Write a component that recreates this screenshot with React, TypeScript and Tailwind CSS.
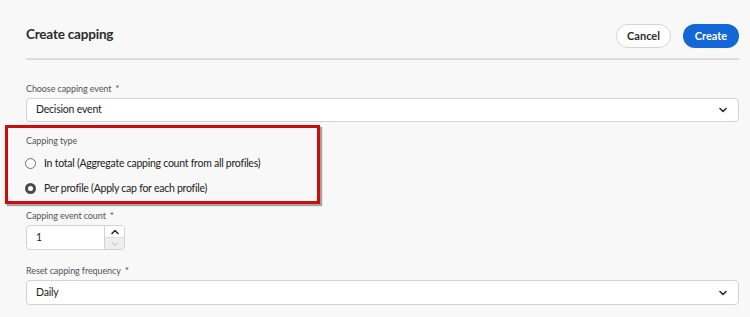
import React from "react";

function Chevron({ light = false, up = false }: { light?: boolean; up?: boolean }) {
  return (
    <svg width="8" height="6" viewBox="0 0 8 6" className={up ? "rotate-180" : ""}>
      <path
        d="M1 1.5 L4 4.5 L7 1.5"
        fill="none"
        stroke={light ? "#b5b5b5" : "#2c2c2c"}
        strokeWidth={light ? 1 : 1.6}
        strokeLinecap="round"
        strokeLinejoin="round"
      />
    </svg>
  );
}

function FieldLabel({ text, required = true }: { text: string; required?: boolean }) {
  return (
    <div className="text-[9px] leading-[12px] tracking-[-0.1px] text-[#555555]">
      {text}
      {required && <span className="ml-[4px] text-[10px] text-[#4b4b4b]">*</span>}
    </div>
  );
}

function SelectBox({ value, h }: { value: string; h: string }) {
  return (
    <div
      className={
        h +
        " flex items-center justify-between rounded-[4px] border border-[#d3d3d3] bg-white pl-[9px] pr-[11px] text-[10.5px] tracking-[-0.2px] text-[#222222]"
      }
    >
      <span>{value}</span>
      <Chevron />
    </div>
  );
}

function Radio({ checked, label }: { checked: boolean; label: string }) {
  return (
    <div className="flex items-center gap-[8px] text-[10.5px] leading-[14px] tracking-[-0.25px] text-[#222222]">
      <span
        className={
          checked
            ? "box-border h-[11px] w-[11px] rounded-full border-[3.5px] border-[#4b4b4b] bg-white"
            : "box-border h-[11px] w-[11px] rounded-full border-[1.5px] border-[#6e6e6e] bg-white"
        }
      />
      <span>{label}</span>
    </div>
  );
}

export default function App() {
  return (
    <div
      className="h-[317px] w-[750px] overflow-hidden bg-[#f8f8f8]"
      style={{ fontFamily: "Lato, 'Open Sans', sans-serif" }}
    >
      <div className="mt-[24px] flex h-[24px] items-center justify-between pl-[26px] pr-[11px]">
        <h1 className="mb-[4px] text-[13.5px] font-bold tracking-[-0.2px] text-[#2c2c2c]">Create capping</h1>
        <div className="flex gap-[12px]">
          <button className="h-[24px] w-[55px] rounded-full border-[1.5px] border-[#d5d5d5] bg-white text-[11px] font-bold text-[#2c2c2c]">
            Cancel
          </button>
          <button className="h-[24px] w-[56px] rounded-full bg-[#1266d6] text-[11px] font-bold text-white">
            Create
          </button>
        </div>
      </div>

      <div className="ml-[26px] mr-[11px] mt-[10px] h-[2px] bg-[#dcdcdc]" />

      <div className="ml-[26px] mr-[11px] mt-[22px]">
        <FieldLabel text="Choose capping event" />
        <div className="mt-[3px]">
          <SelectBox value="Decision event" h="h-[24px]" />
        </div>
      </div>

      <div className="ml-[5px] mt-[3px] h-[79px] w-[315px] border-[3px] border-[#cc0d0d] pl-[18px] pt-[7px] shadow-[2px_2px_1px_rgba(0,0,0,0.35)]">
        <FieldLabel text="Capping type" required={false} />
        <div className="-ml-[1px] mt-[9px] flex flex-col gap-[11px]">
          <Radio checked={false} label="In total (Aggregate capping count from all profiles)" />
          <Radio checked={true} label="Per profile (Apply cap for each profile)" />
        </div>
      </div>

      <div className="ml-[26px] mr-[11px] mt-[5px]">
        <FieldLabel text="Capping event count" />
        <div className="mt-[3px] flex h-[25px] w-[99px] overflow-hidden rounded-[4px] border border-[#d3d3d3] bg-white">
          <div className="flex flex-1 items-center pl-[9px] text-[10.5px] text-[#222222]">1</div>
          <div className="flex w-[20px] flex-col border-l border-[#d3d3d3]">
            <div className="flex flex-1 items-center justify-center bg-white">
              <Chevron up />
            </div>
            <div className="flex flex-1 items-center justify-center border-t border-[#e0e0e0] bg-[#eeeeee]">
              <Chevron light />
            </div>
          </div>
        </div>
      </div>

      <div className="ml-[26px] mr-[11px] mt-[14px]">
        <FieldLabel text="Reset capping frequency" />
        <div className="mt-[3px]">
          <SelectBox value="Daily" h="h-[25px]" />
        </div>
      </div>
    </div>
  );
}
